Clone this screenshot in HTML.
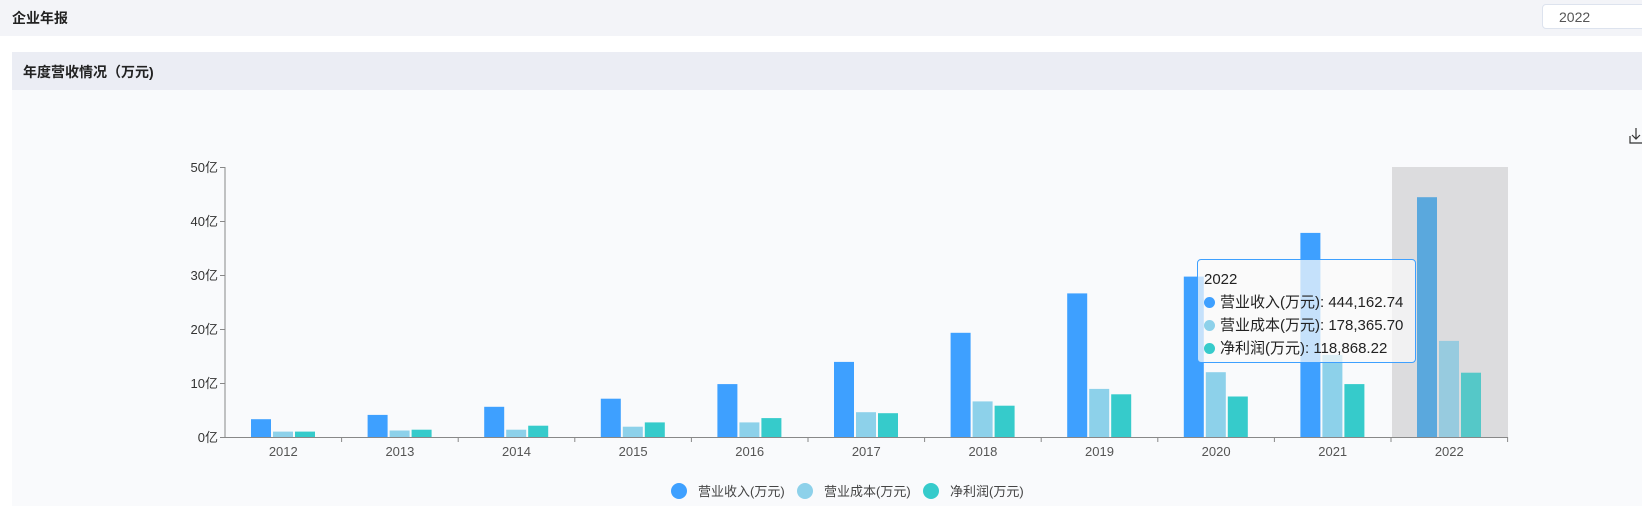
<!DOCTYPE html>
<html><head><meta charset="utf-8"><style>
html,body{margin:0;padding:0;width:1642px;height:506px;overflow:hidden;background:#fff;font-family:"Liberation Sans","Noto Sans CJK SC",sans-serif;}
.top{position:absolute;left:0;top:0;width:1642px;height:36px;background:#f3f4f8;}
.top .t{position:absolute;left:12px;top:8px;font-size:14px;font-weight:bold;color:#222;}
.sel{position:absolute;left:1542px;top:4px;width:110px;height:25px;border:1px solid #dde3ee;border-radius:4px;background:#fff;box-sizing:border-box;}
.sel span{position:absolute;left:16px;top:4px;font-size:14px;color:#555;}
.panel{position:absolute;left:12px;top:52px;width:1630px;height:454px;background:#f9fafc;}
.ph{position:absolute;left:0;top:0;width:100%;height:38px;background:#ebedf4;}
.ph span{position:absolute;left:11px;top:10px;font-size:14px;font-weight:bold;color:#222;}
svg{position:absolute;left:0;top:0;}
.tip{position:absolute;left:1197px;top:259px;width:219px;height:104px;box-sizing:border-box;border:1px solid #3ea0ff;border-radius:4px;background:rgba(250,250,250,0.72);font-size:15px;color:#222;padding:8px 6px;line-height:23px;white-space:nowrap;}
.tip i{display:inline-block;width:11px;height:11px;border-radius:50%;margin-right:5px;vertical-align:-1px;}
</style></head><body>
<div class="top"><span class="t">企业年报</span><div class="sel"><span>2022</span></div></div>
<div class="panel"><div class="ph"><span>年度营收情况（万元)</span></div></div>
<svg width="1642" height="506" xmlns="http://www.w3.org/2000/svg" font-family="Liberation Sans, Noto Sans CJK SC, sans-serif">
<rect x="1392" y="167" width="116" height="270" fill="#dcdcde"/>
<g id="bars"></g>
<g stroke="#888" stroke-width="1">
<line x1="225" y1="167" x2="225" y2="438"/>
<line x1="225" y1="437.5" x2="1508" y2="437.5"/>
<line x1="220" y1="167.5" x2="225" y2="167.5"/><line x1="220" y1="221.5" x2="225" y2="221.5"/><line x1="220" y1="275.5" x2="225" y2="275.5"/><line x1="220" y1="329.5" x2="225" y2="329.5"/><line x1="220" y1="383.5" x2="225" y2="383.5"/><line x1="220" y1="437.5" x2="225" y2="437.5"/>
</g>
<g font-size="13" fill="#333" text-anchor="end">
<text x="218" y="172">50亿</text><text x="218" y="226">40亿</text><text x="218" y="280">30亿</text><text x="218" y="334">20亿</text><text x="218" y="388">10亿</text><text x="218" y="442">0亿</text>
</g>
<g stroke="#333" fill="none" stroke-width="1.2"><path d="M1630 136v7h13M1636 128v11M1632 135l4 4 4-4"/></g>
<circle cx="679" cy="491" r="8" fill="#3ea0ff"/><circle cx="805" cy="491" r="8" fill="#8dd1ea"/><circle cx="931" cy="491" r="8" fill="#36cbcb"/>
<g font-size="13" fill="#444"><text x="698" y="496">营业收入(万元)</text><text x="824" y="496">营业成本(万元)</text><text x="950" y="496">净利润(万元)</text></g>
<g id="xl"></g>
</svg>
<div class="tip">2022<br><i style="background:#3ea0ff"></i>营业收入(万元): 444,162.74<br><i style="background:#8dd1ea"></i>营业成本(万元): 178,365.70<br><i style="background:#36cbcb"></i>净利润(万元): 118,868.22</div>
<script>
var d=[[3.3,1,1],[4.1,1.2,1.35],[5.6,1.35,2.1],[7.1,1.9,2.7],[9.8,2.7,3.5],[13.9,4.6,4.4],[19.3,6.6,5.8],[26.6,8.9,7.9],[29.7,12,7.5],[37.8,15.2,9.8],[44.4,17.8,11.9]];
var c=["#3ea0ff","#8dd1ea","#36cbcb"],ch=["#5aa8dd","#97cbdf","#55c8c8"];
var s="",x="",w=116.6;
for(var i=0;i<11;i++){var b=225+i*w;
for(var j=0;j<3;j++){var h=d[i][j]*5.4;s+='<rect x="'+(b+26+j*22).toFixed(1)+'" y="'+(437-h).toFixed(1)+'" width="20" height="'+h.toFixed(1)+'" fill="'+(i==10?ch[j]:c[j])+'"/>';}
x+='<line x1="'+(b+w).toFixed(1)+'" y1="437" x2="'+(b+w).toFixed(1)+'" y2="442" stroke="#888"/>';
x+='<text x="'+(b+w/2).toFixed(1)+'" y="456" font-size="13" fill="#555" text-anchor="middle">'+(2012+i)+'</text>';}
document.getElementById("bars").innerHTML=s;document.getElementById("xl").innerHTML=x;
</script>
</body></html>
